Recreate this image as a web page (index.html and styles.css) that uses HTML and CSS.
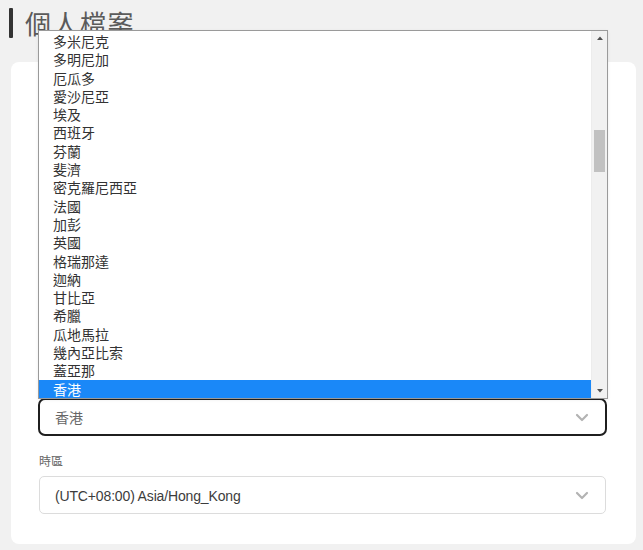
FILE: index.html
```html
<!DOCTYPE html>
<html lang="zh-Hant">
<head>
<meta charset="utf-8">
<title>個人檔案</title>
<link rel="stylesheet" href="styles.css">
</head>
<body>
<div class="page">
  <h1 class="page-title"><span class="title-bar"></span><span class="title-text">個人檔案</span></h1>

  <div class="card">
    <div class="field">
      <div class="select select-focused" aria-label="國家/地區">
        <span class="select-value muted">香港</span>
        <svg class="chevron" width="14" height="9" viewBox="0 0 14 9"><path d="M2 2 L7 7 L12 2" fill="none" stroke="#b3b3b3" stroke-width="2.2" stroke-linecap="round" stroke-linejoin="round"/></svg>
      </div>
    </div>
    <div class="field">
      <label class="field-label">時區</label>
      <div class="select">
        <span class="select-value latin">(UTC+08:00) Asia/Hong_Kong</span>
        <svg class="chevron" width="14" height="9" viewBox="0 0 14 9"><path d="M2 2 L7 7 L12 2" fill="none" stroke="#b3b3b3" stroke-width="2.2" stroke-linecap="round" stroke-linejoin="round"/></svg>
      </div>
    </div>
  </div>

  <div class="listbox">
    <ul class="options">
      <li>多米尼克</li>
      <li>多明尼加</li>
      <li>厄瓜多</li>
      <li>愛沙尼亞</li>
      <li>埃及</li>
      <li>西班牙</li>
      <li>芬蘭</li>
      <li>斐濟</li>
      <li>密克羅尼西亞</li>
      <li>法國</li>
      <li>加彭</li>
      <li>英國</li>
      <li>格瑞那達</li>
      <li>迦納</li>
      <li>甘比亞</li>
      <li>希臘</li>
      <li>瓜地馬拉</li>
      <li>幾內亞比索</li>
      <li>蓋亞那</li>
      <li class="selected">香港</li>
    </ul>
    <div class="scrollbar">
      <svg class="sb-arrow" width="16" height="14" viewBox="0 0 16 14"><path d="M5 9 L8 5.5 L11 9 Z" fill="#505050"/></svg>
      <div class="sb-track"><div class="sb-thumb"></div></div>
      <svg class="sb-arrow" width="16" height="14" viewBox="0 0 16 14"><path d="M5 5 L8 8.5 L11 5 Z" fill="#505050"/></svg>
    </div>
  </div>
</div>
</body>
</html>
```

FILE: styles.css
```css
* { box-sizing: border-box; }

html, body {
  margin: 0;
  padding: 0;
  background: #f1f1f1;
}

body {
  font-family: "Noto Sans CJK TC", "Liberation Sans", sans-serif;
  color: #333;
}

.page {
  position: relative;
  width: 643px;
  height: 550px;
  overflow: hidden;
  padding: 8px 7px 0 11px;
}

.page-title {
  margin: 0;
  display: flex;
  align-items: center;
  gap: 12px;
  height: 30px;
  margin-left: -2px;
}

.title-bar {
  width: 4px;
  height: 30px;
  background: #333;
  border-radius: 1px;
}

.title-text {
  font-size: 26px;
  font-weight: 400;
  color: #5a5a5a;
  line-height: 30px;
  letter-spacing: 1.5px;
}

.card {
  margin-top: 24px;
  background: #fff;
  border-radius: 8px;
  padding: 336px 29px 30px 27px;
  display: flex;
  flex-direction: column;
  gap: 16px;
}

.field {
  display: flex;
  flex-direction: column;
  gap: 7px;
}

.field-label {
  font-size: 12px;
  line-height: 17px;
  color: #666;
  padding-left: 1px;
}

.select {
  height: 38px;
  border: 1px solid #dcdcdc;
  border-radius: 5px;
  display: flex;
  align-items: center;
  justify-content: space-between;
  padding: 0 16px 0 15px;
  margin: 0 1px;
}

.select-focused {
  border: 2px solid #1f1f1f;
  border-radius: 7px;
  margin: 0;
  padding: 0 16px 0 15px;
}

.select-value {
  font-size: 14px;
  color: #444;
}

.select-value.muted { color: #666; }

.select-value.latin {
  font-family: "Liberation Sans", "Noto Sans CJK TC", sans-serif;
  font-size: 14px;
  letter-spacing: -0.15px;
  color: #3c3c3c;
  padding-top: 2px;
}

.chevron { display: block; }

.listbox {
  position: absolute;
  left: 38px;
  top: 30px;
  width: 570px;
  height: 369px;
  background: #fff;
  border: 1px solid #9a9a9a;
  display: flex;
  box-shadow: 0 1px 3px rgba(0,0,0,0.08);
}

.options {
  list-style: none;
  margin: 0;
  padding: 1px 0 0 0;
  flex: 1;
  overflow: hidden;
}

.options li {
  height: 18.3px;
  line-height: 18.3px;
  font-size: 14px;
  color: #333;
  padding-left: 14px;
  white-space: nowrap;
}

.options li.selected {
  background: #1a88f8;
  color: #fff;
}

.scrollbar {
  width: 16px;
  background: #f1f1f1;
  display: flex;
  flex-direction: column;
  border-left: 1px solid #ececec;
}

.sb-arrow { display: block; flex: none; }

.sb-track {
  flex: 1;
  padding-top: 85px;
  padding-left: 2px;
  padding-right: 2px;
}

.sb-thumb {
  height: 42px;
  background: #c1c1c1;
}
```
